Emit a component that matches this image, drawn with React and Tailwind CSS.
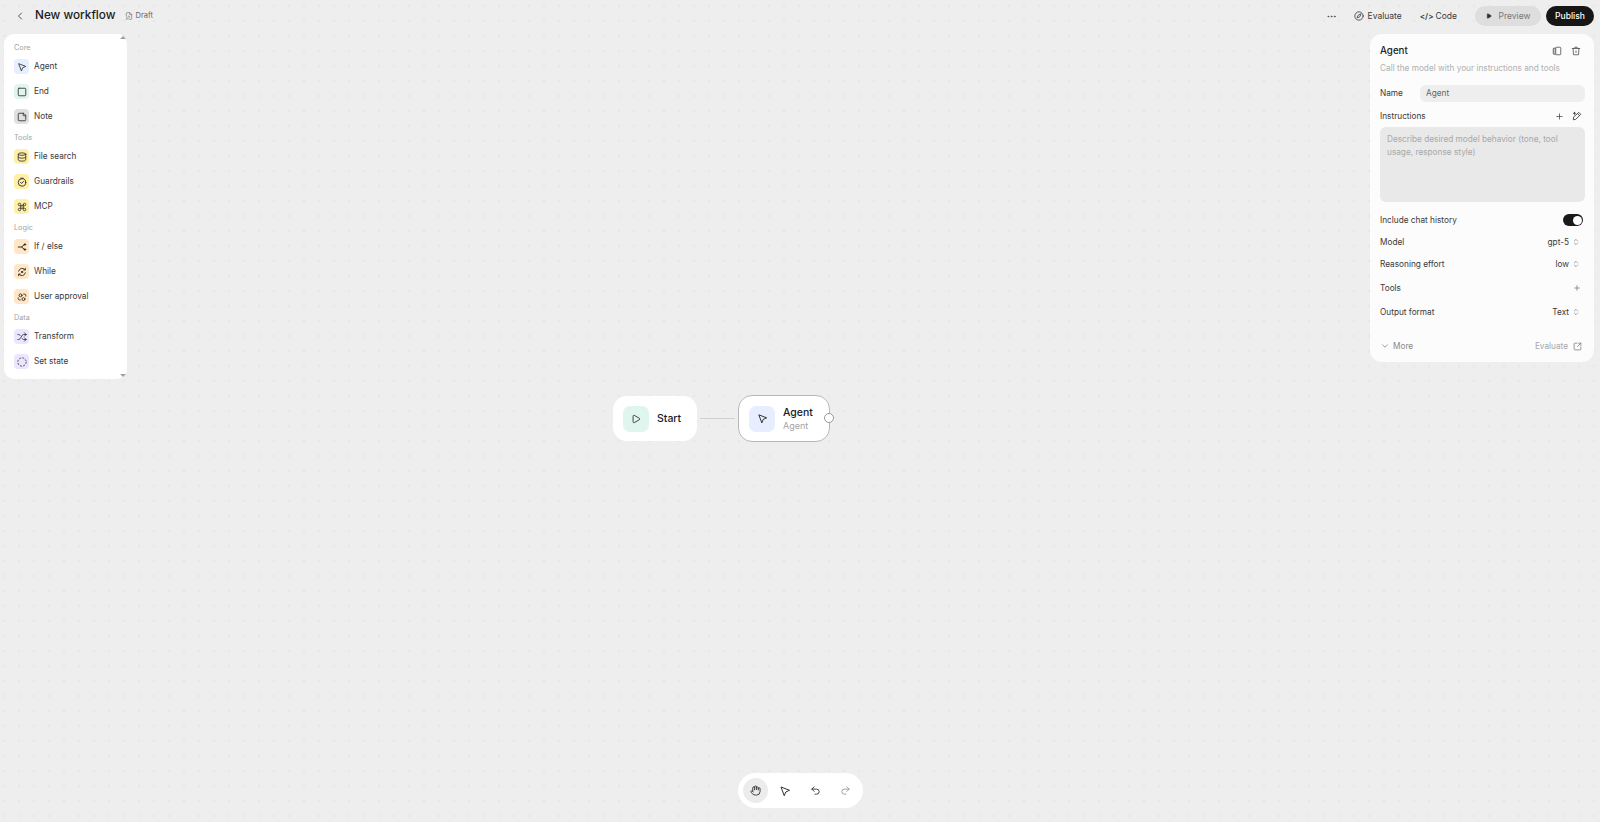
import {
  ChevronLeft, ChevronDown, ChevronsUpDown, Ellipsis, Play, Plus, StickyNote, Database, Shuffle,
  Command, Undo2, Redo2, Hand, SquareArrowOutUpRight, FilePen, Square, Compass,
} from 'lucide-react';

const font = { fontFamily: 'Inter, sans-serif' };

function Cursor({ size = 12, className = '' }) {
  return (
    <svg width={size} height={size} viewBox="0 0 24 24" fill="none" stroke="currentColor" strokeWidth="2" strokeLinejoin="round" className={className}>
      <path d="M4 4 21 10.5 13.5 14 10.5 21.5Z" />
    </svg>
  );
}

function Approval({ size = 12 }) {
  return (
    <svg width={size} height={size} viewBox="0 0 24 24" fill="none" stroke="currentColor" strokeWidth="2.2" strokeLinecap="round">
      <circle cx="8.5" cy="8" r="3.5" />
      <circle cx="15.5" cy="17" r="3.5" />
      <path d="M3 14v2a3 3 0 0 0 3 3h2M21 10V8a3 3 0 0 0-3-3h-2" />
    </svg>
  );
}

function Branch({ size = 12 }) {
  return (
    <svg width={size} height={size} viewBox="0 0 24 24" fill="none" stroke="currentColor" strokeWidth="2.4" strokeLinecap="round">
      <path d="M3 12h8l7-6M11 12l7 6" />
      <circle cx="19" cy="6" r="1.8" fill="currentColor" />
      <circle cx="19" cy="18" r="1.8" fill="currentColor" />
    </svg>
  );
}

function Loop({ size = 12 }) {
  return (
    <svg width={size} height={size} viewBox="0 0 24 24" fill="none" stroke="currentColor" strokeWidth="2.2" strokeLinecap="round" strokeLinejoin="round">
      <path d="M4 10a8.5 8.5 0 0 1 15-3.5M20 14a8.5 8.5 0 0 1-15 3.5" />
      <path d="M20 3v4h-4M4 21v-4h4" />
      <circle cx="12" cy="12" r="1.6" fill="currentColor" />
    </svg>
  );
}

function Guard({ size = 12 }) {
  return (
    <svg width={size} height={size} viewBox="0 0 24 24" fill="none" stroke="currentColor" strokeWidth="2.2" strokeLinecap="round" strokeLinejoin="round">
      <circle cx="12" cy="13" r="9" />
      <path d="M9 3h6M8.5 13l2.5 2.5 4.5-5" />
    </svg>
  );
}

function DashedRing({ size = 12 }) {
  return (
    <svg width={size} height={size} viewBox="0 0 24 24" fill="none" stroke="currentColor" strokeWidth="2" strokeDasharray="4.5 3.35">
      <circle cx="12" cy="12" r="10" />
    </svg>
  );
}

function CopyPanel({ size = 12 }) {
  return (
    <svg width={size} height={size} viewBox="0 0 24 24" fill="none" stroke="currentColor" strokeWidth="2" strokeLinejoin="round">
      <rect x="9" y="3" width="12" height="18" rx="2" />
      <path d="M9 5H5a2 2 0 0 0-2 2v11a2 2 0 0 0 2 2h4" fill="currentColor" fillOpacity="0.35" />
    </svg>
  );
}

function Bin({ size = 12 }) {
  return (
    <svg width={size} height={size} viewBox="0 0 24 24" fill="none" stroke="currentColor" strokeWidth="2" strokeLinecap="round" strokeLinejoin="round">
      <path d="M3 6h18M9 6V3h6v3M5 6l1 15h12l1-15" />
      <path d="M12 12v4" />
    </svg>
  );
}

function PenSpark({ size = 12 }) {
  return (
    <svg width={size} height={size} viewBox="0 0 24 24" fill="none" stroke="currentColor" strokeWidth="2.2" strokeLinecap="round" strokeLinejoin="round">
      <path d="M17 4l4 4L9 20l-6 1 1-6Z" />
      <path d="M14 7l4 4M6 3v5M3.5 5.5h5" />
    </svg>
  );
}

const groups = [
  {
    title: 'Core',
    items: [
      { label: 'Agent', Icon: Cursor, bg: 'bg-[#e6eeff]' },
      { label: 'End', Icon: Square, bg: 'bg-[#e0f5ee]' },
      { label: 'Note', Icon: StickyNote, bg: 'bg-[#e0e0e0]' },
    ],
  },
  {
    title: 'Tools',
    items: [
      { label: 'File search', Icon: Database, bg: 'bg-[#fff0a8]' },
      { label: 'Guardrails', Icon: Guard, bg: 'bg-[#fff0a8]' },
      { label: 'MCP', Icon: Command, bg: 'bg-[#fff0a8]' },
    ],
  },
  {
    title: 'Logic',
    items: [
      { label: 'If / else', Icon: Branch, bg: 'bg-[#ffe6c4]' },
      { label: 'While', Icon: Loop, bg: 'bg-[#ffe6c4]' },
      { label: 'User approval', Icon: Approval, bg: 'bg-[#ffe6c4]' },
    ],
  },
  {
    title: 'Data',
    items: [
      { label: 'Transform', Icon: Shuffle, bg: 'bg-[#ebe5ff]' },
      { label: 'Set state', Icon: DashedRing, bg: 'bg-[#ebe5ff]' },
    ],
  },
];

function Sidebar() {
  return (
    <aside className="relative w-[123px] h-[345px] bg-white rounded-[10px] pl-[10px] pt-[7.5px] shrink-0">
      <div className="absolute right-[1px] top-[2px] w-0 h-0 border-x-[3px] border-x-transparent border-b-[3px] border-b-[#a0a0a0]" />
      <div className="absolute right-[1px] bottom-[2px] w-0 h-0 border-x-[3px] border-x-transparent border-t-[3px] border-t-[#a0a0a0]" />
      {groups.map((group) => (
        <div key={group.title}>
          <div className="h-[11px] leading-[11px] text-[7.25px] text-[#a3a3a3] mb-[6.5px]">{group.title}</div>
          <div className="flex flex-col gap-[10px] mb-[7.5px]">
            {group.items.map(({ label, Icon, bg }) => (
              <div key={label} className="flex items-center gap-[5px] h-[15px]">
                <div className={`w-[15px] h-[15px] rounded-[4px] flex items-center justify-center text-[#2f2f2f] ${bg}`}>
                  <Icon size={10} />
                </div>
                <span className="text-[8.25px] text-[#3a3a3a]">{label}</span>
              </div>
            ))}
          </div>
        </div>
      ))}
    </aside>
  );
}

function Stepper({ value }) {
  return (
    <div className="flex items-center gap-[3px] text-[8.25px] text-[#3a3a3a] mr-[5px]">
      {value}
      <ChevronsUpDown size={8} className="text-[#777]" />
    </div>
  );
}

function Row({ label, children, className = '' }) {
  return (
    <div className={`flex items-center justify-between text-[8.25px] text-[#3a3a3a] ${className}`}>
      <span>{label}</span>
      {children}
    </div>
  );
}

function Inspector() {
  return (
    <aside className="w-[224px] h-[328px] bg-[#fcfcfc] rounded-[12px] shrink-0 pl-[10px] pr-[9px] pt-[11px] flex flex-col">
      <div className="flex items-center justify-between h-[12px]">
        <span className="text-[9.75px] font-medium text-[#222]">Agent</span>
        <div className="flex items-center gap-[9px] text-[#555] mr-[4px]">
          <CopyPanel size={10} />
          <Bin size={10} />
        </div>
      </div>
      <p className="text-[8.25px] text-[#b0b0b0] mt-[5px] h-[12px] leading-[12px]">Call the model with your instructions and tools</p>
      <Row label="Name" className="mt-[11px]">
        <div className="w-[165px] h-[17px] bg-[#eeeeee] rounded-[6px] px-[6px] flex items-center text-[8.25px] text-[#666]">Agent</div>
      </Row>
      <Row label="Instructions" className="mt-[8px] h-[12px]">
        <div className="flex items-center gap-[8px] text-[#444] mr-[3px]">
          <Plus size={9} />
          <PenSpark size={10} />
        </div>
      </Row>
      <div className="mt-[5px] h-[75px] bg-[#e9e9e9] rounded-[6px] px-[7px] pt-[6px] text-[8.25px] leading-[13px] text-[#a8a8a8]">
        Describe desired model behavior (tone, tool usage, response style)
      </div>
      <Row label="Include chat history" className="mt-[12px] h-[12px]">
        <div className="w-[20px] h-[12px] bg-[#1a1a1a] rounded-full flex items-center justify-end pr-[1px] mr-[2px]">
          <div className="w-[9px] h-[9px] bg-white rounded-full" />
        </div>
      </Row>
      <Row label="Model" className="mt-[10px] h-[12px]"><Stepper value="gpt-5" /></Row>
      <Row label="Reasoning effort" className="mt-[10px] h-[12px]"><Stepper value="low" /></Row>
      <Row label="Tools" className="mt-[12px] h-[12px]"><Plus size={8} className="text-[#666] mr-[4px]" /></Row>
      <Row label="Output format" className="mt-[12px] h-[12px]"><Stepper value="Text" /></Row>
      <div className="flex items-center justify-between mt-[22px] h-[12px] text-[8.25px] text-[#888]">
        <div className="flex items-center gap-[3px]"><ChevronDown size={10} />More</div>
        <div className="flex items-center gap-[5px] text-[#a8a8a8] mr-[3px]">Evaluate<SquareArrowOutUpRight size={9} className="text-[#777]" /></div>
      </div>
    </aside>
  );
}

function Header() {
  return (
    <header className="h-[32px] flex items-center justify-between pl-[14px] pr-[6px]">
      <div className="flex items-center">
        <ChevronLeft size={12} className="text-[#555]" />
        <span className="ml-[9px] text-[11.75px] font-medium text-[#1a1a1a]">New workflow</span>
        <FilePen size={8} className="ml-[10px] text-[#777]" />
        <span className="ml-[2px] text-[7.5px] text-[#666]">Draft</span>
      </div>
      <div className="flex items-center text-[8.5px] text-[#3a3a3a]">
        <Ellipsis size={11} className="text-[#555] mr-[17px]" />
        <div className="flex items-center gap-[4px] mr-[18px]"><Compass size={10} />Evaluate</div>
        <div className="flex items-center gap-[2px] mr-[18px]">
          <span className="text-[8px] font-semibold">&lt;/&gt;</span>Code
        </div>
        <div className="w-[66px] h-[20px] rounded-full bg-[#dedede] flex items-center justify-center gap-[7px] text-[#777] mr-[5px]">
          <Play size={6} fill="#333" className="text-[#333]" />Preview
        </div>
        <div className="w-[48px] h-[20px] rounded-full bg-[#161616] flex items-center justify-center text-white font-medium">Publish</div>
      </div>
    </header>
  );
}

export default function App() {
  return (
    <div
      style={font}
      className="relative w-[1600px] h-[822px] overflow-hidden bg-[#eeeeee] bg-[radial-gradient(circle,#dadada_0.7px,transparent_1.1px)] bg-[size:15px_15px] bg-[position:-3.5px_-1.5px]"
    >
      <Header />
      <div className="flex justify-between items-start pt-[2px] pl-[4px] pr-[6px]">
        <Sidebar />
        <Inspector />
      </div>

      {/* Canvas nodes */}
      <div className="absolute left-[613px] top-[396px] w-[84px] h-[45px] rounded-[14px] bg-white flex items-center pl-[10px]">
        <div className="w-[26px] h-[26px] rounded-[7px] bg-[#e0f5ee] flex items-center justify-center"><Play size={10} className="text-[#222]" /></div>
        <span className="ml-[8px] text-[10.5px] font-medium text-[#1a1a1a]">Start</span>
      </div>
      <div className="absolute left-[700px] top-[418px] w-[35px] h-px bg-[#d0d0d0]" />
      <div className="absolute left-[738px] top-[395px] w-[92px] h-[47px] rounded-[14px] bg-white border-[1.5px] border-[#b8b8b8] flex items-center pl-[10px]">
        <div className="w-[26px] h-[26px] rounded-[7px] bg-[#e6eeff] flex items-center justify-center text-[#222]"><Cursor size={11} /></div>
        <div className="ml-[8px]">
          <div className="text-[10.5px] leading-[13px] font-medium text-[#1a1a1a]">Agent</div>
          <div className="text-[9px] leading-[13px] text-[#a3a3a3]">Agent</div>
        </div>
      </div>
      <div className="absolute left-[824px] top-[413px] w-[10px] h-[10px] rounded-full bg-white border border-[#9a9a9a]" />

      {/* Bottom toolbar */}
      <div className="absolute left-[738px] top-[773px] w-[125px] h-[35px] rounded-full bg-white flex items-center pl-[5px] text-[#333]">
        <div className="w-[25px] h-[25px] rounded-full bg-[#ececec] flex items-center justify-center"><Hand size={11} /></div>
        <div className="ml-[11px] flex items-center gap-[19px]">
          <Cursor size={12} />
          <Undo2 size={11} />
          <Redo2 size={11} className="text-[#999]" />
        </div>
      </div>
    </div>
  );
}
